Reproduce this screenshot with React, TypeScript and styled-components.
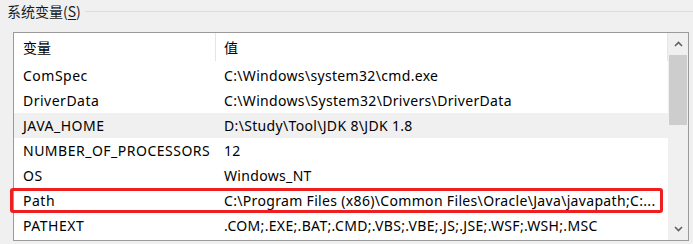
import React from "react";
import styled, { createGlobalStyle } from "styled-components";

const Global = createGlobalStyle`
  html, body { margin: 0; padding: 0; background: #f0f0f0; }
  body { font-family: "Noto Sans", "Noto Sans CJK SC", sans-serif; font-size: 14px; color: #000; }
`;

const Page = styled.div`
  width: 693px;
  height: 244px;
  overflow: hidden;
  position: relative;
  background: #f0f0f0;
`;

const Legend = styled.div`
  display: flex;
  align-items: center;
  height: 20px;
  padding-left: 7px;
  margin-top: 1px;
  gap: 4px;
`;

const LegendText = styled.span`
  font-family: "Noto Sans CJK SC", sans-serif;
  font-size: 14px;
  line-height: 20px;
  color: #1a1a1a;
  u { text-decoration: underline; text-underline-offset: 2px; }
`;

const LegendLine = styled.div`
  flex: 1;
  height: 1px;
  background: #dcdcdc;
`;

const ListBox = styled.div`
  position: relative;
  margin: 11px 0 0 13px;
  width: 676px;
  height: 209px;
  box-sizing: border-box;
  border: 1px solid #9a9a9a;
  background: #fff;
  display: flex;
`;

const Content = styled.div`
  flex: 1;
  overflow: hidden;
`;

const Row = styled.div<{ $shaded?: boolean }>`
  display: grid;
  grid-template-columns: 201px 1fr;
  height: 25px;
  align-items: center;
  background: ${(p) => (p.$shaded ? "#f0f0f0" : "#fff")};
  white-space: nowrap;
`;

const HeaderRow = styled.div`
  display: grid;
  grid-template-columns: 201px 1fr;
  height: 30px;
  align-items: start;
`;

const HeaderCell = styled.div<{ $sep?: boolean }>`
  font-family: "Noto Sans CJK SC", sans-serif;
  font-size: 14px;
  height: 28px;
  line-height: 28px;
  padding-left: ${(p) => (p.$sep ? "8px" : "9px")};
  border-left: ${(p) => (p.$sep ? "1px solid #e5e5e5" : "none")};
  border-right: ${(p) => (p.$sep ? "1px solid #e5e5e5" : "none")};
`;

const Cell = styled.div<{ $value?: boolean }>`
  padding-left: 9px;
  overflow: hidden;
  line-height: 25px;
  letter-spacing: ${(p) => (p.$value ? "0.33px" : "0.5px")};
`;

const ScrollBar = styled.div`
  width: 20px;
  background: #f0f0f0;
  display: flex;
  flex-direction: column;
  align-items: center;
`;

const Arrow = styled.div`
  height: 22px;
  width: 100%;
  display: flex;
  align-items: center;
  justify-content: center;
`;

const Thumb = styled.div`
  width: 18px;
  height: 70px;
  background: #cdcdcd;
`;

const Spacer = styled.div`
  flex: 1;
`;

const Highlight = styled.div`
  position: absolute;
  left: 10px;
  top: 188px;
  width: 653px;
  height: 25px;
  box-sizing: border-box;
  border: 3px solid #f01e1e;
  border-radius: 3px;
  pointer-events: none;
`;

const rows: [string, string][] = [
  ["ComSpec", "C:\\Windows\\system32\\cmd.exe"],
  ["DriverData", "C:\\Windows\\System32\\Drivers\\DriverData"],
  ["JAVA_HOME", "D:\\Study\\Tool\\JDK 8\\JDK 1.8"],
  ["NUMBER_OF_PROCESSORS", "12"],
  ["OS", "Windows_NT"],
  ["Path", "C:\\Program Files (x86)\\Common Files\\Oracle\\Java\\javapath;C:..."],
  ["PATHEXT", ".COM;.EXE;.BAT;.CMD;.VBS;.VBE;.JS;.JSE;.WSF;.WSH;.MSC"],
];

const Chevron = ({ up }: { up?: boolean }) => (
  <svg width="9" height="6" viewBox="0 0 9 6">
    <path
      d={up ? "M1 5 L4.5 1.5 L8 5" : "M1 1 L4.5 4.5 L8 1"}
      fill="none"
      stroke="#606060"
      strokeWidth="1.6"
    />
  </svg>
);

export default function App() {
  return (
    <Page>
      <Global />
      <Legend>
        <LegendText>
          系统变量(<u>S</u>)
        </LegendText>
        <LegendLine />
      </Legend>
      <ListBox>
        <Content>
          <HeaderRow>
            <HeaderCell>变量</HeaderCell>
            <HeaderCell $sep>值</HeaderCell>
          </HeaderRow>
          {rows.map(([n, v]) => (
            <Row key={n} $shaded={n === "JAVA_HOME"}>
              <Cell>{n}</Cell>
              <Cell $value>{v}</Cell>
            </Row>
          ))}
        </Content>
        <ScrollBar>
          <Arrow>
            <Chevron up />
          </Arrow>
          <Thumb />
          <Spacer />
          <Arrow>
            <Chevron />
          </Arrow>
        </ScrollBar>
      </ListBox>
      <Highlight />
    </Page>
  );
}
